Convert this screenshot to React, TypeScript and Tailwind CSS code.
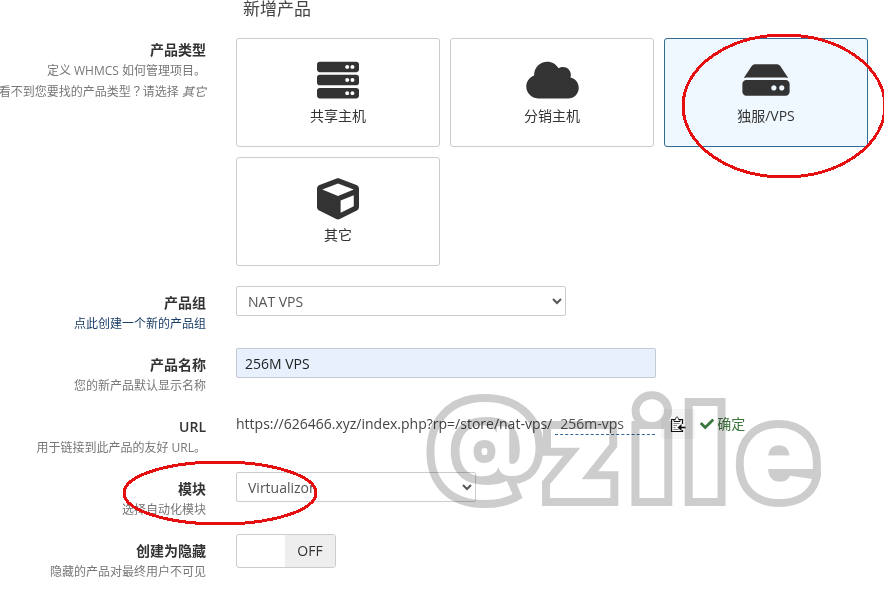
import type { ReactNode } from "react";
import { FaCheck, FaCloud, FaCube, FaHdd, FaServer } from "react-icons/fa";

type RowProps = {
  title: string;
  htmlFor?: string;
  help: ReactNode;
  children: ReactNode;
};

function Row({ title, htmlFor, help, children }: RowProps) {
  return (
    <div className="mb-[14px] grid grid-cols-[206px_minmax(0,1fr)] gap-x-[30px]">
      <div className="flex flex-col items-end pt-[7px] text-right">
        <label htmlFor={htmlFor} className="text-sm leading-5 font-semibold text-[#333]">
          {title}
        </label>
        <div className="pt-px text-xs leading-5 whitespace-nowrap text-[#777]">{help}</div>
      </div>
      <div className="min-w-0">{children}</div>
    </div>
  );
}

type CardProps = { label: string; icon: ReactNode; selected?: boolean };

function TypeCard({ label, icon, selected = false }: CardProps) {
  return (
    <button
      type="button"
      aria-pressed={selected}
      className={
        "flex h-[109px] w-[204px] flex-col items-center rounded-[3px] border pt-5 text-[#333] " +
        (selected ? "border-[#336b92] bg-[#f0f8ff]" : "border-[#ccc] bg-white")
      }
    >
      {icon}
      <span className="mt-[5px] text-sm leading-5">{label}</span>
    </button>
  );
}

function PasteIcon() {
  return (
    <svg viewBox="0 0 16 17" className="h-[17px] w-4" fill="none" stroke="#111" aria-hidden="true">
      <path d="M4 3.500H1.500v12h11V14M10 3.500h2.500V8" strokeWidth="1.200" />
      <path d="M4 5.500v-2h1.500c0-3.300 3-3.300 3 0H10v2z" fill="#fff" />
      <path d="M3.500 7.500h6M3.500 9.500h3.500M3.500 11.500h2M3.500 13.500h5" stroke="#888" />
      <path d="M15.500 11.500H10" strokeWidth="1.600" />
      <path d="M7.500 11.500l4-3.500v7z" fill="#111" stroke="none" />
    </svg>
  );
}

const selectClass =
  "block h-[30px] max-w-full rounded-[2px] border border-[#ccc] bg-white px-[7px] text-sm text-[#555]";

export default function App() {
  return (
    <main
      lang="zh-CN"
      className="relative overflow-x-clip bg-white pb-2 font-['Open_Sans','Noto_Sans_CJK_SC',sans-serif] text-sm text-[#333]"
    >
      <h1 className="mb-[15px] pl-[243px] text-[17px] leading-[18px] text-[#444]">新增产品</h1>
      <form>
        <Row
          title="产品类型"
          help={
            <>
              定义 WHMCS 如何管理项目。
              <div>
                看不到您要找的产品类型<span lang="zh-TW" className="font-['Noto_Sans_CJK_TC',sans-serif]">？</span>请选择 <em>其它</em>
              </div>
            </>
          }
        >
          <div className="flex flex-wrap gap-[10px] pt-[5px] pb-[6px]">
            <TypeCard label="共享主机" icon={<FaServer className="h-[42px] w-[42px]" />} />
            <TypeCard label="分销主机" icon={<FaCloud className="h-[42px] w-[53px]" />} />
            <TypeCard label="独服/VPS" selected icon={<FaHdd className="h-[42px] w-12" />} />
            <TypeCard label="其它" icon={<FaCube className="h-[42px] w-[42px]" />} />
          </div>
        </Row>

        <Row
          title="产品组"
          htmlFor="group"
          help={
            <a href="#new-group" className="text-[#1a3d66]">
              点此创建一个新的产品组
            </a>
          }
        >
          <select id="group" className={selectClass + " w-[330px]"}>
            <option>NAT VPS</option>
          </select>
        </Row>

        <Row title="产品名称" htmlFor="name" help="您的新产品默认显示名称">
          <input
            id="name"
            type="text"
            defaultValue="256M VPS"
            className="block h-[30px] w-[420px] max-w-full rounded-[2px] border border-[#c5c9d0] bg-[#e8f0fe] px-2 text-sm text-[#222]"
          />
        </Row>

        <Row title="URL" htmlFor="slug" help="用于链接到此产品的友好 URL。">
          <div className="flex h-7 items-center whitespace-nowrap text-[#444]">
            <span>https://626466.xyz/index.php?rp=/store/nat-vps/</span>
            <input
              id="slug"
              type="text"
              defaultValue="256m-vps"
              className="ml-[3px] h-[22px] w-[100px] border-b border-dashed border-[#336699] bg-transparent px-[5px] text-sm text-[#555]"
            />
            <button
              type="button"
              aria-label="复制"
              className="ml-[6px] flex h-[30px] w-[34px] items-center justify-center rounded-[3px] bg-[#f6f6f6]"
            >
              <PasteIcon />
            </button>
            <span className="ml-[5px] flex items-center gap-[3px] text-[#3c763d]">
              <FaCheck className="h-[14px] w-[14px]" />
              确定
            </span>
          </div>
        </Row>

        <Row title="模块" htmlFor="module" help="选择自动化模块">
          <select id="module" className={selectClass + " w-[240px]"}>
            <option>Virtualizor</option>
          </select>
        </Row>

        <Row title="创建为隐藏" htmlFor="hidden" help="隐藏的产品对最终用户不可见">
          <label className="flex h-[34px] w-[100px] cursor-pointer overflow-hidden rounded-[3px] border border-[#ccc] bg-white">
            <input id="hidden" type="checkbox" className="sr-only" />
            <span className="w-12" />
            <span className="flex-1 bg-[#eee] text-center text-sm leading-8">OFF</span>
          </label>
        </Row>
      </form>

      <div
        aria-hidden="true"
        className="pointer-events-none absolute top-[389px] left-[431px] flex gap-4 font-['Inter',sans-serif] text-[126px] leading-[126px] font-black whitespace-nowrap text-white mix-blend-multiply [paint-order:stroke] [-webkit-text-stroke:16px_#cdcdcd]"
      >
        <span className="-mt-3 -mr-3 text-[102px]">@</span>
        <span>z</span>
        <span>i</span>
        <span>l</span>
        <span>e</span>
      </div>

      <svg
        aria-hidden="true"
        viewBox="0 0 206 146"
        className="pointer-events-none absolute top-[33px] left-[681px] h-[146px] w-[206px]"
        fill="none"
        stroke="#e60f0f"
        strokeWidth="3"
        shapeRendering="crispEdges"
      >
        <ellipse cx="103" cy="73" rx="101" ry="71" />
      </svg>
      <svg
        aria-hidden="true"
        viewBox="0 0 196 68"
        className="pointer-events-none absolute top-[459px] left-[122px] h-[68px] w-[196px]"
        fill="none"
        stroke="#e60f0f"
        strokeWidth="3"
        shapeRendering="crispEdges"
      >
        <ellipse cx="98" cy="34" rx="96" ry="31" />
      </svg>
    </main>
  );
}
